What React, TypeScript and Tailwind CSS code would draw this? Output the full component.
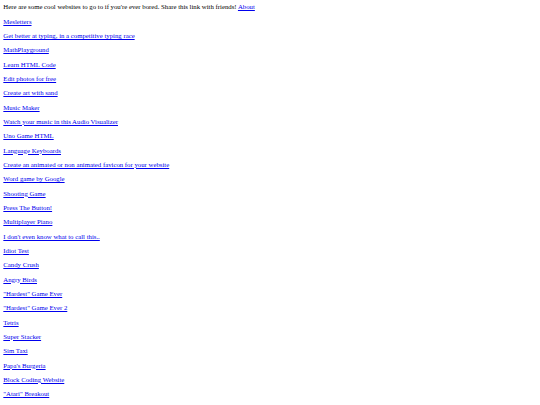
const links = [
    'Mesletters',
    'Get better at typing, in a competitive typing race',
    'MathPlayground',
    'Learn HTML Code',
    'Edit photos for free',
    'Create art with sand',
    'Music Maker',
    'Watch your music in this Audio Visualizer',
    'Uno Game HTML',
    'Language Keyboards',
    'Create an animated or non animated favicon for your website',
    'Word game by Google',
    'Shooting Game',
    'Press The Button!',
    'Multiplayer Piano',
    "I don't even know what to call this..",
    'Idiot Test',
    'Candy Crush',
    'Angry Birds',
    '"Hardest" Game Ever',
    '"Hardest" Game Ever 2',
    'Tetris',
    'Super Stacker',
    'Sim Taxi',
    "Papa's Burgeria",
    'Block Coding Website',
    '"Atari" Breakout',
];

export default function App() {
    return (
        <div className="min-h-[405px] bg-white px-[3.33px] pt-[3.33px] text-[6.78px] leading-[7.67px] text-black [font-family:'Liberation_Serif',serif]">
            <div className="flex flex-col gap-[6.67px]">
                <div>
                    Here are some cool websites to go to if you're ever bored. Share this link with friends!{' '}
                    <a href="#" className="text-[#0000ee] underline">About</a>
                </div>
                {links.map((label) => (
                    <p key={label}>
                        <a href="#" className="text-[#0000ee] underline">{label}</a>
                    </p>
                ))}
            </div>
        </div>
    );
}
